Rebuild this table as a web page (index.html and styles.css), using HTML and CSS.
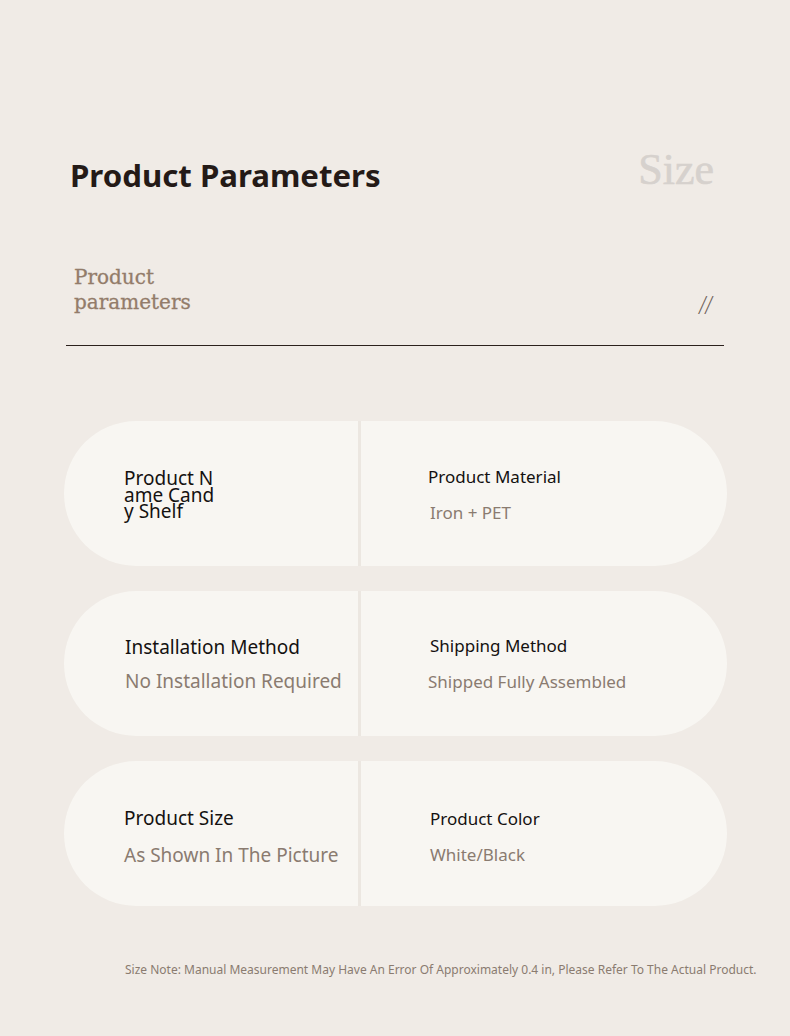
FILE: index.html
```html
<!DOCTYPE html>
<html>
<head>
<meta charset="utf-8">
<link rel="stylesheet" href="styles.css">
</head>
<body>
<div class="page">
  <header class="hero">
    <div class="title-row">
      <h1 class="title">Product Parameters</h1>
      <span class="ghost">Size</span>
    </div>
    <div class="sub-row">
      <div class="sub">Product<br>parameters</div>
      <span class="slashes">//</span>
    </div>
  </header>

  <section class="cards">
    <div class="card card-first">
      <div class="cell cell-left">
        <div class="name">Product Name Candy Shelf</div>
      </div>
      <div class="cell cell-right">
        <div class="label small">Product Material</div>
        <div class="value small v-1">Iron + PET</div>
      </div>
    </div>
    <div class="card">
      <div class="cell cell-left">
        <div class="label l-left2">Installation Method</div>
        <div class="value l-left2">No Installation Required</div>
      </div>
      <div class="cell cell-right">
        <div class="label small l-2">Shipping Method</div>
        <div class="value small">Shipped Fully Assembled</div>
      </div>
    </div>
    <div class="card card-low">
      <div class="cell cell-left">
        <div class="label">Product Size</div>
        <div class="value v-3">As Shown In The Picture</div>
      </div>
      <div class="cell cell-right">
        <div class="label small l-2">Product Color</div>
        <div class="value small v-3s">White/Black</div>
      </div>
    </div>
  </section>

  <p class="note">Size Note: Manual Measurement May Have An Error Of Approximately 0.4 in, Please Refer To The Actual Product.</p>
</div>
</body>
</html>
```

FILE: styles.css
```css
html, body {
  margin: 0;
  padding: 0;
}
body {
  background: #f0ebe6;
  font-family: "Noto Sans", "Open Sans", sans-serif;
  width: 790px;
  height: 1036px;
  overflow: hidden;
}
.page {
  padding-top: 155px;
}
.hero {
  margin: 0 66px;
  border-bottom: 1px solid #2b211d;
  padding-bottom: 30px;
}
.title-row {
  display: flex;
  justify-content: space-between;
  align-items: center;
  padding: 0 10px 0 4px;
  height: 40px;
}
.title {
  margin: 0;
  font-size: 31.2px;
  line-height: 40px;
  font-weight: 700;
  color: #241a17;
}
.ghost {
  font-family: "Liberation Serif", serif;
  font-size: 44px;
  line-height: 40px;
  color: #d6d1cd;
  position: relative;
  top: -5px;
  -webkit-text-stroke: 0.6px #d6d1cd;
}
.sub-row {
  display: flex;
  justify-content: space-between;
  align-items: flex-end;
  margin-top: 70px;
  padding: 0 11px 0 8px;
}
.sub {
  font-family: "DejaVu Serif", serif;
  font-size: 20px;
  line-height: 25px;
  color: #937c6a;
  -webkit-text-stroke: 0.3px #937c6a;
}
.slashes {
  font-family: "DejaVu Sans", sans-serif;
  font-size: 22px;
  line-height: 25px;
  color: #6f625a;
  font-weight: 200;
  letter-spacing: -1px;
  transform: skewX(-8deg);
  display: inline-block;
  position: relative;
  top: 2px;
  left: -1px;
}
.cards {
  margin: 75px 63px 0 64px;
  display: flex;
  flex-direction: column;
  gap: 25px;
}
.card {
  display: flex;
  height: 145px;
  border-radius: 72px;
  overflow: hidden;
  background: #ece7e1;
  gap: 3px;
}
.cell {
  background: #f8f6f2;
  display: flex;
  flex-direction: column;
  justify-content: center;
}
.cell-left {
  width: 294px;
  padding-left: 60px;
  box-sizing: border-box;
}
.cell-right {
  flex: 1;
  padding-left: 67px;
}
.card-first .cell {
  padding-top: 3px;
}
.card-low .cell {
  padding-top: 6px;
}
.name {
  width: 95px;
  word-break: break-all;
  font-size: 19px;
  line-height: 16.5px;
  color: #141110;
}
.label {
  font-size: 19px;
  line-height: 26px;
  color: #141110;
}
.value {
  font-size: 19px;
  line-height: 26px;
  color: #8a7b70;
  margin-top: 8px;
}
.l-left2 {
  padding-left: 1px;
}
.small {
  font-size: 17px;
}
.label.small {
  line-height: 24px;
}
.value.small {
  line-height: 24px;
  margin-top: 12px;
}
.v-1 {
  padding-left: 2px;
}
.l-2 {
  padding-left: 2px;
}
.v-3 {
  margin-top: 11px;
}
.v-3s {
  padding-left: 2px;
  margin-top: 13px;
}
.note {
  margin: 56px 0 0 125px;
  font-size: 12px;
  line-height: 16px;
  color: #8a7b70;
  white-space: nowrap;
}
```
